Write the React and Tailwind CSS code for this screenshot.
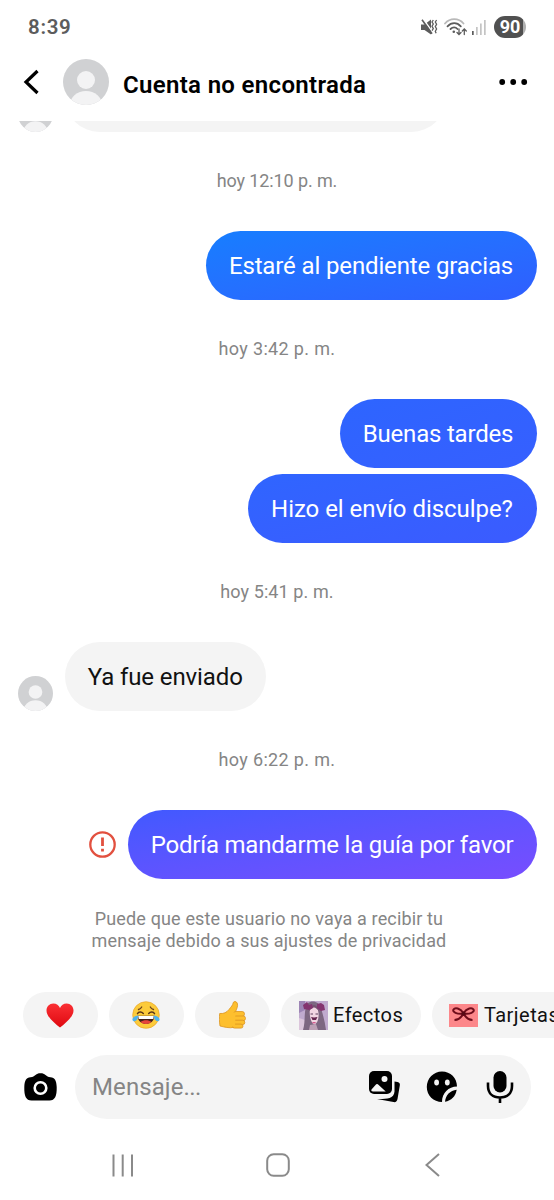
import { clsx } from "clsx";

function Avatar({ className }) {
  return (
    <svg viewBox="0 0 46 46" className={clsx("shrink-0", className)}>
      <clipPath id="avatar-clip">
        <circle cx="23" cy="23" r="23" />
      </clipPath>
      <g clipPath="url(#avatar-clip)">
        <rect width="46" height="46" fill="#d0d1d3" />
        <circle cx="23" cy="21" r="9" fill="#f3f3f4" />
        <ellipse cx="23" cy="46" rx="16" ry="14" fill="#f3f3f4" />
      </g>
    </svg>
  );
}

function StatusBar() {
  return (
    <div className="flex h-[54px] shrink-0 items-center justify-between pl-7 pr-[28px] text-[#5c5c5c]">
      <span className="text-[20.5px] font-semibold tracking-[0.7px]">8:39</span>
      <div className="flex items-center">
        <svg width="17" height="16" viewBox="0 0 17 16" className="mr-[6px]">
          <path d="M0 5.500h3.500L10 .5v15L3.500 11H0z" fill="#5c5c5c" />
          <path d="M2.200 0l10 14" stroke="#fff" strokeWidth="1.500" />
          <path d="M1 .8l10 14" stroke="#5c5c5c" strokeWidth="1.600" />
          <path d="M12.300 1l-1.300 2 1.300 2-1.300 2.300 1.300 2.300-1.200 2M15.600 1l-1.300 2 1.300 2.300-1.300 2.300 1.300 2.400-1.300 2.300.8 2" fill="none" stroke="#5c5c5c" strokeWidth="1.300" />
        </svg>
        <svg width="23" height="18" viewBox="0 0 23 18" fill="none" strokeLinecap="round" className="mr-[5px]">
          <path d="M1 5.500C6-.3 14.500-.3 19.500 5.500" stroke="#b9b9b9" strokeWidth="1.800" />
          <path d="M3.500 8.300c4-4.200 9.500-4.200 13.300 0" stroke="#5c5c5c" strokeWidth="1.800" />
          <path d="M6.500 11c2.300-2.300 5-2.300 7 0" stroke="#5c5c5c" strokeWidth="1.800" />
          <circle cx="9.800" cy="13.700" r="1.300" fill="#5c5c5c" />
          <path d="M15 11v5.300M13 14.500l2 2 2-2M20.300 16.500v-5.300M18.300 13l2-2 2 2" stroke="#5c5c5c" strokeWidth="1.300" />
        </svg>
        <svg width="15" height="16" viewBox="0 0 15 16" className="mr-[7px]">
          <rect y="12" width="1.700" height="4" fill="#5c5c5c" />
          <rect x="4" y="8" width="1.700" height="8" fill="#c4c4c4" />
          <rect x="8" y="4.500" width="1.700" height="11.500" fill="#c4c4c4" />
          <rect x="12" y="1" width="1.700" height="15" fill="#c4c4c4" />
        </svg>
        <div className="flex h-[22px] w-8 items-center justify-center rounded-full bg-linear-to-r from-[#505050] from-90% to-[#b0b0b0] to-90% text-lg font-bold text-white">
          90
        </div>
      </div>
    </div>
  );
}

function Header() {
  return (
    <header className="flex h-[67px] shrink-0 items-center pb-[11px] pl-[23px] pr-[26px]">
      <svg width="17" height="26" viewBox="0 0 17 26" fill="none" className="mr-[23px]">
        <path d="M14.500 2L3 13l11.500 11" stroke="#000" strokeWidth="3.200" />
      </svg>
      <Avatar className="size-[46px]" />
      <h1 className="ml-[14px] mt-[5px] text-[24px] font-semibold tracking-[0.33px] text-black">Cuenta no encontrada</h1>
      <svg width="29" height="6" viewBox="0 0 29 6" className="ml-auto">
        <circle cx="3.200" cy="3" r="2.900" />
        <circle cx="14.200" cy="3" r="2.900" />
        <circle cx="25.200" cy="3" r="2.900" />
      </svg>
    </header>
  );
}

function Timestamp({ className = "tracking-[0.35px]", children }) {
  return (
    <div className={clsx("flex h-[99px] shrink-0 items-center justify-center pb-[2px] text-lg text-[#858585]", className)}>
      {children}
    </div>
  );
}

function Bubble({ className, children }) {
  return (
    <div className={clsx("flex h-[69px] shrink-0 items-center justify-center whitespace-nowrap rounded-full text-2xl", className)}>
      {children}
    </div>
  );
}

function Heart() {
  return (
    <svg width="28" height="25" viewBox="0 0 28 25">
      <linearGradient id="heart" x2="0" y2="1">
        <stop stopColor="#fa3034" />
        <stop offset="1" stopColor="#df0810" />
      </linearGradient>
      <path d="M14 24.500C9 20.500.5 14 .5 7.500.5 3.500 3.500.5 7.300.5 10.500.5 13 2.500 14 5 15 2.500 17.500.5 20.700.5c3.800 0 6.800 3 6.800 7C27.500 14 19 20.500 14 24.500z" fill="url(#heart)" />
    </svg>
  );
}

function JoyFace() {
  return (
    <svg width="28" height="28" viewBox="0 0 28 28" fill="none">
      <circle cx="14" cy="14" r="13.300" fill="#fccb3b" stroke="#e9a62c" strokeWidth=".7" />
      <path d="M6.500 8.500c1.200-.3 2.500-1.200 3.200-2.500M21.500 8.500c-1.200-.3-2.500-1.200-3.200-2.500" stroke="#6b421e" strokeWidth="1.300" strokeLinecap="round" />
      <path d="M5.500 12.700c1.200-2.200 4-2.200 5.800-.3M22.500 12.700c-1.200-2.200-4-2.200-5.800-.3" stroke="#5a3518" strokeWidth="1.500" strokeLinecap="round" />
      <path d="M5.500 14.800h17c-.3 5-3.500 8-8.500 8s-8.200-3-8.500-8z" fill="#432018" />
      <path d="M6.200 15h15.600l-.5 3H6.700z" fill="#fff" />
      <path d="M8.500 21c3-2.300 8-2.300 11 0-2.500 2.500-8.500 2.500-11 0z" fill="#e6443b" />
      <path d="M6.500 14.500C3.500 14.700.4 16.300.4 18.500c.1 2 2.600 2.300 4.100.8 1.200-1.200 1.500-2.800 2-4.800zM21.500 14.500c3 .2 6.100 1.800 6.100 4-.1 2-2.600 2.300-4.100.8-1.200-1.200-1.500-2.800-2-4.800z" fill="#4fb2ed" />
    </svg>
  );
}

function ThumbsUp() {
  return (
    <svg width="27" height="28" viewBox="0 0 27 28" stroke="#dc9420" strokeWidth=".8">
      <path d="M.7 12.500c4 .4 7-1 9.300-4 2.200-2.800 3.800-4.300 4.200-6.700.3-1.500 3-1.800 4 .2 1.200 3-.7 6.300-1.700 8.800l-1.500 15.500c-4.500 1.200-10-.3-14-1.300C.3 21 .2 16 .7 12.500z" fill="#fdbf2e" />
      <rect x="14.500" y="10.500" width="11" height="5" rx="2.400" fill="#fdbf2e" />
      <rect x="14.500" y="15" width="12" height="4.700" rx="2.300" fill="#fdbf2e" />
      <rect x="14" y="19.200" width="11.800" height="4.400" rx="2.200" fill="#fdbf2e" />
      <rect x="13.500" y="23.100" width="10.500" height="4" rx="2" fill="#fdbf2e" />
      <path d="M11 11.500h5.500l-.5 14h-5z" fill="#fdbf2e" stroke="none" />
    </svg>
  );
}

function EffectThumb() {
  return (
    <svg width="29" height="29" viewBox="0 0 29 29">
      <rect width="29" height="29" fill="#c0aace" />
      <path d="M0 0h6v9L0 12z" fill="#9d85b5" />
      <path d="M0 17l6 2v10H0z" fill="#dcc6dc" />
      <path d="M9 2c4-3 11-2 13 5 2 7 4 14 5 22H4C7 20 4 9 9 2z" fill="#7d6781" />
      <path d="M11 7c3-3 7-2 8 2 1.500 7 0 13-3.500 14.500C11.500 22.500 10 13 11 7z" fill="#f1d6e2" />
      <path d="M9.500 11c1-5 4-7 5.500-7 2.500 0 4.500 3 5.500 7-2-3-4-4.500-5.500-4.500s-3.500 1.500-5.500 4.500z" fill="#755270" />
      <path d="M4 4l4-3 2 3 3-1 1 4-4 2-5-1zM18 3l4-1 3 2 1 5-4 1-4-3z" fill="#84346f" />
      <path d="M11.500 13h2.500M16.500 13h2.500" stroke="#5c405c" strokeWidth="1" />
      <path d="M12 16l3 .5 3.500-.5-1.500 3h-3.500z" fill="#65264f" />
      <path d="M13.500 21.500q1.500.8 3 0" stroke="#c93a78" strokeWidth="1.200" fill="none" />
      <path d="M11 24l-1 5h9l-2-6z" fill="#bca0b5" />
    </svg>
  );
}

function CardThumb() {
  return (
    <svg width="29" height="23" viewBox="0 0 29 23">
      <rect width="29" height="23" fill="#fc878a" />
      <path d="M14.500 9C11 4 6 3 4.500 5.500S8 10.500 14.500 9.500C21 10.500 26 8 24.500 5.500S18 4 14.500 9zM14 10c-2 4-5 6-8.500 6M15 10c2 4 5 6 8.500 6" fill="none" stroke="#6f0d1b" strokeWidth="2" />
      <circle cx="14.500" cy="9.500" r="2" fill="#570914" />
    </svg>
  );
}

function Chip({ className, children }) {
  return (
    <div className={clsx("flex h-[46px] shrink-0 items-center rounded-full bg-[#f4f4f4] text-[20px] tracking-[0.45px] text-[#111]", className)}>
      {children}
    </div>
  );
}

function Composer() {
  return (
    <div className="mt-[17px] flex h-16 shrink-0 items-center pl-6">
      <svg width="33" height="28" viewBox="0 0 33 28" className="mr-[18px]">
        <path d="M6.500 4.200c2.500-.2 3.500-1 5-2.200C13 .7 14 .2 16.500.2S20 .7 21.500 2c1.500 1.200 2.500 2 5 2.200 4.300.4 6 3.300 6.200 9.800.2 9-1.700 13.500-7.200 13.500h-18C2 27.500.1 23 .3 14 .5 7.500 2.200 4.600 6.500 4.200z" />
        <circle cx="16.500" cy="15" r="5.800" fill="none" stroke="#fff" strokeWidth="2.600" />
      </svg>
      <div className="flex h-full w-[456px] items-center rounded-full bg-[#f4f4f4] pl-[17px] pr-[17.500px]">
        <span className="text-2xl tracking-[-0.55px] text-[#858585]"><span className="tracking-[0.1px]">Mensaje</span>...</span>
        <svg width="32" height="32" viewBox="0 0 32 32" className="ml-auto">
          <path d="M25.500 10.500l3 .6c2 .4 2.700 1.500 2.300 3.500l-2.300 13.500c-.4 2.300-1.700 3.400-4 3L8 28c8 0 17 .5 17.500-7.500z" />
          <rect width="23" height="23" rx="5" />
          <circle cx="15.500" cy="8" r="3" fill="#f4f4f4" />
          <path d="M2.500 18.500l4-4.500c1-1.200 2-1.200 3.200 0l7 6.500H4c-1.500 0-2-.8-1.500-2z" fill="#f4f4f4" />
        </svg>
        <svg width="32" height="32" viewBox="0 0 32 32" className="ml-[25px]">
          <path d="M16 .5c8.500 0 15 6.500 15 15-8.500 0-15 6.500-15 15.500C7.500 31 .8 24.500.8 16S7.500.5 16 .5z" />
          <path d="M30.700 18.800c-1 6.500-5.500 11-11.700 12 .5-6.500 5-11.200 11.700-12z" />
          <ellipse cx="10.600" cy="11.500" rx="2.400" ry="3" fill="#f4f4f4" />
          <ellipse cx="21.300" cy="11.500" rx="2.400" ry="3" fill="#f4f4f4" />
        </svg>
        <svg width="28" height="32" viewBox="0 0 28 32" className="ml-[28px]">
          <rect x="7.500" width="13" height="21.500" rx="6.500" />
          <path d="M2 11.500v3.500c0 7.500 5 11.500 12 11.500s12-4 12-11.500v-3.500M14 26v6" fill="none" stroke="#000" strokeWidth="2.600" />
        </svg>
      </div>
    </div>
  );
}

function NavBar() {
  return (
    <nav className="flex flex-1 items-center pl-[111px] pt-[11px]">
      <svg width="23" height="23" viewBox="0 0 23 23" stroke="#8a8a8a" strokeWidth="2">
        <path d="M2.500.5v22M11.700.5v22M21 .5v22" />
      </svg>
      <svg width="24" height="24" viewBox="0 0 24 24" fill="none" stroke="#8a8a8a" strokeWidth="2" className="ml-[131.500px]">
        <rect x="1.200" y="1.200" width="21.600" height="21.600" rx="6.500" />
      </svg>
      <svg width="15" height="24" viewBox="0 0 15 24" fill="none" stroke="#8a8a8a" strokeWidth="2" className="ml-[135px]">
        <path d="M14 1L1.500 12 14 23" />
      </svg>
    </nav>
  );
}

export default function App() {
  return (
    <div className="flex h-[1200px] w-[554px] flex-col overflow-hidden bg-white font-['Roboto','Noto_Sans',sans-serif]">
      <StatusBar />
      <Header />
      <main className="flex h-[871px] shrink-0 flex-col">
        {/* tail of the previous message, cut off by the header */}
        <div className="flex h-[11px] shrink-0 items-end overflow-hidden pl-[17.5px]">
          <Avatar className="size-[35px]" />
          <Bubble className="ml-3 w-[381px] bg-[#f4f4f4]" />
        </div>
        <Timestamp className="tracking-[-0.12px]">hoy 12:10 p. m.</Timestamp>
        <Bubble className="ml-auto mr-[17.5px] w-[331px] bg-linear-to-br from-[#167eff] to-[#2f5eff] tracking-[-0.13px] text-white">
          Estaré al pendiente gracias
        </Bubble>
        <Timestamp>hoy 3:42 p. m.</Timestamp>
        <Bubble className="ml-auto mr-[17.5px] w-[197px] bg-linear-to-br from-[#2d65ff] to-[#365fff] tracking-[-0.2px] text-white">
          Buenas tardes
        </Bubble>
        <Bubble className="ml-auto mr-[17.5px] mt-1.5 w-[289px] bg-linear-to-br from-[#2f65ff] to-[#3b5bff] tracking-[-0.05px] text-white">
          Hizo el envío disculpe?
        </Bubble>
        <Timestamp className="tracking-[0.1px]">hoy 5:41 p. m.</Timestamp>
        <div className="flex items-end pl-[17.5px]">
          <Avatar className="size-[35px]" />
          <Bubble className="ml-3 w-[201.5px] bg-[#f4f4f4] tracking-[-0.1px] text-[#111]">Ya fue enviado</Bubble>
        </div>
        <Timestamp>hoy 6:22 p. m.</Timestamp>
        <div className="flex items-center justify-end pr-[17.5px]">
          <svg width="27" height="27" viewBox="0 0 27 27" fill="none" stroke="#e2503f" className="mr-3">
            <circle cx="13.500" cy="13.500" r="12.200" strokeWidth="2.300" />
            <path d="M13.500 6.500v8.500M13.500 17.700v2.800" strokeWidth="2.800" />
          </svg>
          <Bubble className="w-[409px] bg-linear-to-br from-[#4059ff] to-[#774dff] tracking-[-0.2px] text-white">
            Podría mandarme la guía por favor
          </Bubble>
        </div>
        <p className="mt-[29px] w-[538px] text-center text-lg leading-[22px] tracking-[0.15px] text-[#858585]">
          Puede que este usuario no vaya a recibir tu
          <br />
          mensaje debido a sus ajustes de privacidad
        </p>
      </main>
      <div className="flex shrink-0 gap-[11.5px] overflow-hidden pl-[23px]">
        <Chip className="w-[74.5px] justify-center"><Heart /></Chip>
        <Chip className="w-[74.5px] justify-center"><JoyFace /></Chip>
        <Chip className="w-[74.5px] justify-center"><ThumbsUp /></Chip>
        <Chip className="w-[139.5px] gap-[5px] pl-[18px]">
          <EffectThumb />
          Efectos
        </Chip>
        <Chip className="w-[150px] gap-[6px] pl-[17px]">
          <CardThumb />
          Tarjetas
        </Chip>
      </div>
      <Composer />
      <NavBar />
    </div>
  );
}
